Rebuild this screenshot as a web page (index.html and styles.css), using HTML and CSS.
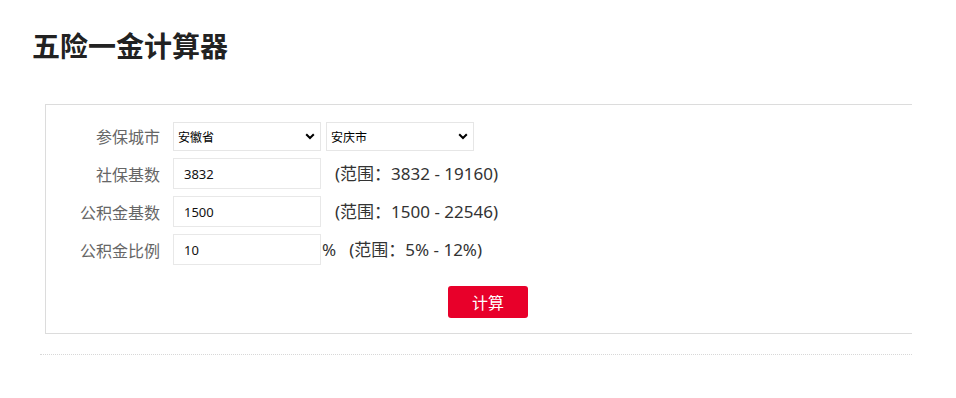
FILE: index.html
```html
<!DOCTYPE html>
<html lang="zh-CN">
<head>
<meta charset="utf-8">
<title>五险一金计算器</title>
<link rel="stylesheet" href="styles.css">
</head>
<body>
<h1 class="title">五险一金计算器</h1>
<div class="wrap">
  <div class="panel">
    <div class="row row-first">
      <label class="label">参保城市</label>
      <div class="sel-wrap">
        <select class="sel"><option>安徽省</option></select>
        <svg class="chev" width="10" height="7" viewBox="0 0 10 7"><path d="M1.2 1.2 L5 5 L8.8 1.2" fill="none" stroke="#000" stroke-width="2"/></svg>
      </div>
      <div class="sel-wrap sel-gap">
        <select class="sel"><option>安庆市</option></select>
        <svg class="chev" width="10" height="7" viewBox="0 0 10 7"><path d="M1.2 1.2 L5 5 L8.8 1.2" fill="none" stroke="#000" stroke-width="2"/></svg>
      </div>
    </div>
    <div class="row">
      <label class="label">社保基数</label>
      <input class="inp" type="text" value="3832">
      <span class="range">(范围：3832 - 19160)</span>
    </div>
    <div class="row">
      <label class="label">公积金基数</label>
      <input class="inp" type="text" value="1500">
      <span class="range">(范围：1500 - 22546)</span>
    </div>
    <div class="row">
      <label class="label">公积金比例</label>
      <input class="inp" type="text" value="10">
      <span class="unit">%</span>
      <span class="range range-pct">(范围：5% - 12%)</span>
    </div>
    <div class="btn-row">
      <button class="btn" type="button">计算</button>
    </div>
  </div>
  <div class="divider"></div>
</div>
</body>
</html>
```

FILE: styles.css
```css
html, body {
  margin: 0;
  padding: 0;
  background: #fff;
}
body {
  font-family: "Noto Sans", "Noto Sans CJK SC", sans-serif;
  color: #333;
}
.title {
  margin: 0;
  padding: 29px 0 0 32px;
  font-size: 28px;
  line-height: 32px;
  font-weight: bold;
  color: #222;
  font-family: "Noto Sans CJK SC", sans-serif;
}
.wrap {
  margin: 43px 0 0 40px;
  width: 872px;
}
.panel {
  margin-left: 5px;
  border: 1px solid #dcdcdc;
  border-right: none;
  padding: 16px 0 15px 0;
}
.row {
  display: flex;
  align-items: center;
  height: 31px;
  margin-bottom: 7px;
}
.row-first {
  height: 30px;
  align-items: flex-start;
}
.row-first .sel-wrap {
  margin-top: 1px;
}
.label {
  width: 114px;
  margin-right: 13px;
  text-align: right;
  font-size: 16px;
  color: #666;
  font-family: "Noto Sans CJK SC", sans-serif;
  line-height: 20px;
}
.row-first .label {
  margin-top: 5px;
}
.sel-wrap {
  position: relative;
  width: 148px;
  height: 29px;
}
.sel-gap {
  margin-left: 5px;
}
.sel {
  -webkit-appearance: none;
  appearance: none;
  box-sizing: border-box;
  width: 148px;
  height: 29px;
  border: 1px solid #e6e6e6;
  border-radius: 0;
  background: #fff;
  padding: 0 0 0 4px;
  font-size: 12px;
  color: #000;
  font-family: "Noto Sans CJK SC", sans-serif;
  outline: none;
}
.chev {
  position: absolute;
  right: 6px;
  top: 11px;
  pointer-events: none;
}
.inp {
  box-sizing: border-box;
  width: 148px;
  height: 31px;
  border: 1px solid #e8e8e8;
  padding: 0 0 0 10px;
  font-size: 13px;
  color: #111;
  font-family: "Noto Sans", sans-serif;
  outline: none;
}
.range {
  margin-left: 14px;
  font-size: 17px;
  color: #333;
  line-height: 20px;
  white-space: nowrap;
}
.unit {
  font-size: 17px;
  color: #333;
  margin-left: 1px;
  line-height: 20px;
}
.range-pct {
  margin-left: 13px;
}
.btn-row {
  padding-left: 402px;
  padding-top: 14px;
}
.btn {
  display: block;
  width: 80px;
  height: 32px;
  border: none;
  border-radius: 3px;
  background: #e8002a;
  color: #fff;
  font-size: 16px;
  font-family: "Noto Sans CJK SC", sans-serif;
  padding: 0;
  cursor: pointer;
}
.divider {
  margin-top: 20px;
  border-top: 1px dotted #d8d8d8;
}
```
